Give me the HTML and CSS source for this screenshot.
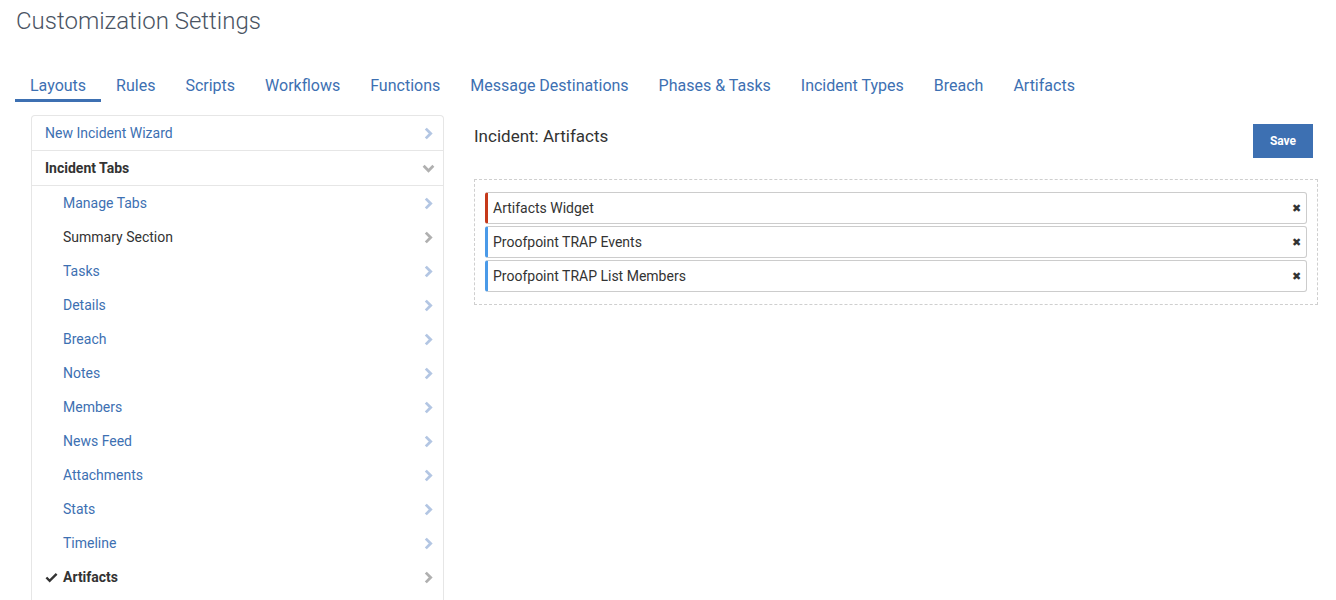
FILE: index.html
```html
<!DOCTYPE html>
<html>
<head>
<meta charset="utf-8">
<link rel="stylesheet" href="styles.css">
</head>
<body>
<div class="page">
  <h1 class="title">Customization Settings</h1>
  <nav class="tabs">
    <a class="tab active">Layouts</a>
    <a class="tab">Rules</a>
    <a class="tab">Scripts</a>
    <a class="tab">Workflows</a>
    <a class="tab">Functions</a>
    <a class="tab">Message Destinations</a>
    <a class="tab">Phases &amp; Tasks</a>
    <a class="tab">Incident Types</a>
    <a class="tab">Breach</a>
    <a class="tab">Artifacts</a>
  </nav>
  <div class="content">
    <aside class="sidebar">
      <div class="row top link"><span>New Incident Wizard</span><svg class="chev blue" viewBox="0 0 8 12"><polyline points="1.5,1.5 6,6 1.5,10.5"/></svg></div>
      <div class="row top group"><span>Incident Tabs</span><svg class="chev down" viewBox="0 0 12 8"><polyline points="1.5,1.5 6,6 10.5,1.5"/></svg></div>
      <div class="row sub link"><span>Manage Tabs</span><svg class="chev blue" viewBox="0 0 8 12"><polyline points="1.5,1.5 6,6 1.5,10.5"/></svg></div>
      <div class="row sub plain"><span>Summary Section</span><svg class="chev grey" viewBox="0 0 8 12"><polyline points="1.5,1.5 6,6 1.5,10.5"/></svg></div>
      <div class="row sub link"><span>Tasks</span><svg class="chev blue" viewBox="0 0 8 12"><polyline points="1.5,1.5 6,6 1.5,10.5"/></svg></div>
      <div class="row sub link"><span>Details</span><svg class="chev blue" viewBox="0 0 8 12"><polyline points="1.5,1.5 6,6 1.5,10.5"/></svg></div>
      <div class="row sub link"><span>Breach</span><svg class="chev blue" viewBox="0 0 8 12"><polyline points="1.5,1.5 6,6 1.5,10.5"/></svg></div>
      <div class="row sub link"><span>Notes</span><svg class="chev blue" viewBox="0 0 8 12"><polyline points="1.5,1.5 6,6 1.5,10.5"/></svg></div>
      <div class="row sub link"><span>Members</span><svg class="chev blue" viewBox="0 0 8 12"><polyline points="1.5,1.5 6,6 1.5,10.5"/></svg></div>
      <div class="row sub link"><span>News Feed</span><svg class="chev blue" viewBox="0 0 8 12"><polyline points="1.5,1.5 6,6 1.5,10.5"/></svg></div>
      <div class="row sub link"><span>Attachments</span><svg class="chev blue" viewBox="0 0 8 12"><polyline points="1.5,1.5 6,6 1.5,10.5"/></svg></div>
      <div class="row sub link"><span>Stats</span><svg class="chev blue" viewBox="0 0 8 12"><polyline points="1.5,1.5 6,6 1.5,10.5"/></svg></div>
      <div class="row sub link"><span>Timeline</span><svg class="chev blue" viewBox="0 0 8 12"><polyline points="1.5,1.5 6,6 1.5,10.5"/></svg></div>
      <div class="row sub selected"><span class="sel"><svg class="check" viewBox="0 0 14 11"><polyline points="1.5,5.5 5,9 12.5,1.5"/></svg>Artifacts</span><svg class="chev grey" viewBox="0 0 8 12"><polyline points="1.5,1.5 6,6 1.5,10.5"/></svg></div>
    </aside>
    <main class="panel">
      <div class="panel-head">
        <h2 class="panel-title">Incident: Artifacts</h2>
        <button class="save">Save</button>
      </div>
      <div class="dropzone">
        <div class="widget red"><span>Artifacts Widget</span><span class="x">&#x2716;</span></div>
        <div class="widget blue"><span>Proofpoint TRAP Events</span><span class="x">&#x2716;</span></div>
        <div class="widget blue"><span>Proofpoint TRAP List Members</span><span class="x">&#x2716;</span></div>
      </div>
    </main>
  </div>
</div>
</body>
</html>
```

FILE: styles.css
```css
* { box-sizing: border-box; }
html, body { margin: 0; padding: 0; background: #fff; }
body {
  font-family: Roboto, "Open Sans", "Liberation Sans", sans-serif;
  color: #333;
  height: 600px;
  overflow: hidden;
}
.page { padding: 0 18px 0 15px; }
.title {
  margin: 0;
  padding-top: 6px;
  font-size: 24px;
  line-height: 30px;
  font-weight: 300;
  color: #4a5463;
  padding-left: 1px;
}
.tabs {
  display: flex;
  margin-top: 36px;
  height: 30px;
}
.tab {
  padding: 0 15px;
  font-size: 16px;
  line-height: 27px;
  color: #3d70b2;
  border-bottom: 3px solid transparent;
  cursor: pointer;
}
.tab.active { border-bottom-color: #3d70b2; }
.content {
  display: flex;
  gap: 30px;
  margin-top: 13px;
  padding-left: 16px;
}
.sidebar {
  width: 413px;
  flex: none;
  border: 1px solid #e6e6e6;
  border-bottom: none;
  border-radius: 4px 4px 0 0;
  height: 490px;
}
.row {
  display: flex;
  align-items: center;
  justify-content: space-between;
  font-size: 14px;
  padding-right: 10px;
}
.row.top {
  height: 35px;
  padding-left: 13px;
  border-bottom: 1px solid #e6e6e6;
}
.row.sub { height: 34px; padding-left: 31px; }
.link span { color: #3d70b2; }
.group span { font-weight: 700; color: #333; }
.plain span { color: #333; }
.selected .sel { font-weight: 700; color: #333; display: flex; align-items: center; margin-left: -18px; }
.check { width: 13px; height: 11px; margin-right: 5px; fill: none; stroke: #333; stroke-width: 2.6; }
.chev { width: 9px; height: 13px; fill: none; stroke-width: 2.6; }
.chev.down { width: 13px; height: 9px; stroke: #b0b0b0; margin-right: -2px; }
.chev.blue { stroke: #b3c6e3; }
.chev.grey { stroke: #b0b0b0; }
.panel { flex: 1; }
.panel-head {
  display: flex;
  justify-content: space-between;
  align-items: flex-start;
  height: 64px;
}
.panel-title {
  margin: 0;
  font-size: 17px;
  font-weight: 400;
  line-height: 20px;
  margin-top: 11px;
  color: #333;
}
.save {
  margin-top: 9px;
  margin-right: 5px;
  width: 60px;
  height: 34px;
  border: none;
  background: #3d70b2;
  color: #fff;
  font-family: inherit;
  font-size: 12px;
  font-weight: 700;
}
.dropzone {
  border: 1px dashed #cfcfcf;
  padding: 12px 10px;
  display: flex;
  flex-direction: column;
  gap: 2px;
}
.widget {
  height: 32px;
  border: 1px solid #cccccc;
  border-left-width: 3px;
  border-radius: 3px;
  display: flex;
  align-items: center;
  justify-content: space-between;
  padding: 0 5px 0 5px;
  font-size: 14px;
  color: #333;
}
.widget.red { border-left-color: #c5391a; }
.widget.blue { border-left-color: #4a9ae8; }
.x { font-size: 11px; color: #333; }
```
